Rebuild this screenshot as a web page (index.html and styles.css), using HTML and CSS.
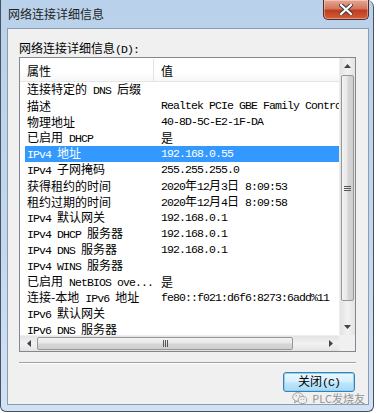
FILE: index.html
```html
<!DOCTYPE html>
<html lang="zh-CN">
<head>
    <meta charset="UTF-8">
    <title>网络连接详细信息</title>
    <link rel="stylesheet" href="styles.css">
</head>
<body>
    <div class="window">
        <div class="titlebar">
            <span class="title">网络连接详细信息</span>
            <button class="close-btn" type="button" aria-label="关闭">
                <svg width="14" height="11" viewBox="0 0 14 11">
                    <path d="M2 1 L12 10 M12 1 L2 10" stroke="#3c3c3c" stroke-width="4.2" stroke-linecap="square"/>
                    <path d="M2 1 L12 10 M12 1 L2 10" stroke="#ffffff" stroke-width="2.2" stroke-linecap="square"/>
                </svg>
            </button>
        </div>

        <div class="panel">
            <div class="panel-label">网络连接详细信息<span class="en">(D):</span></div>

            <div class="listbox">
                <div class="list-main">
                    <div class="list-header">
                        <div class="col-name">属性</div>
                        <div class="col-value">值</div>
                    </div>
                    <div class="list-rows">
                        <div class="row"><div class="col-name">连接特定的<span class="en"> DNS </span>后缀</div><div class="col-value"></div></div>
                        <div class="row"><div class="col-name">描述</div><div class="col-value en">Realtek PCIe GBE Family Controller</div></div>
                        <div class="row"><div class="col-name">物理地址</div><div class="col-value en">40-8D-5C-E2-1F-DA</div></div>
                        <div class="row"><div class="col-name">已启用<span class="en"> DHCP</span></div><div class="col-value">是</div></div>
                        <div class="row selected"><div class="col-name"><span class="en">IPv4 </span>地址</div><div class="col-value en">192.168.0.55</div></div>
                        <div class="row"><div class="col-name"><span class="en">IPv4 </span>子网掩码</div><div class="col-value en">255.255.255.0</div></div>
                        <div class="row"><div class="col-name">获得租约的时间</div><div class="col-value"><span class="en">2020</span>年<span class="en">12</span>月<span class="en">3</span>日<span class="en"> 8:09:53</span></div></div>
                        <div class="row"><div class="col-name">租约过期的时间</div><div class="col-value"><span class="en">2020</span>年<span class="en">12</span>月<span class="en">4</span>日<span class="en"> 8:09:58</span></div></div>
                        <div class="row"><div class="col-name"><span class="en">IPv4 </span>默认网关</div><div class="col-value en">192.168.0.1</div></div>
                        <div class="row"><div class="col-name"><span class="en">IPv4 DHCP </span>服务器</div><div class="col-value en">192.168.0.1</div></div>
                        <div class="row"><div class="col-name"><span class="en">IPv4 DNS </span>服务器</div><div class="col-value en">192.168.0.1</div></div>
                        <div class="row"><div class="col-name"><span class="en">IPv4 WINS </span>服务器</div><div class="col-value"></div></div>
                        <div class="row"><div class="col-name">已启用<span class="en"> NetBIOS ove...</span></div><div class="col-value">是</div></div>
                        <div class="row"><div class="col-name">连接-本地<span class="en"> IPv6 </span>地址</div><div class="col-value en">fe80::f021:d6f6:8273:6add%11</div></div>
                        <div class="row"><div class="col-name"><span class="en">IPv6 </span>默认网关</div><div class="col-value"></div></div>
                        <div class="row"><div class="col-name"><span class="en">IPv6 DNS </span>服务器</div><div class="col-value"></div></div>
                    </div>
                </div>

                <div class="vscroll">
                    <div class="arrow">
                        <svg width="7" height="4" viewBox="0 0 7 4"><path d="M0 4 L3.5 0 L7 4 Z" fill="#444"/></svg>
                    </div>
                    <div class="vthumb"><span class="grip-v"></span></div>
                    <div class="vtrack"></div>
                    <div class="arrow">
                        <svg width="7" height="4" viewBox="0 0 7 4"><path d="M0 0 L3.5 4 L7 0 Z" fill="#444"/></svg>
                    </div>
                </div>

                <div class="hscroll">
                    <div class="arrow">
                        <svg width="4" height="7" viewBox="0 0 4 7"><path d="M4 0 L0 3.5 L4 7 Z" fill="#444"/></svg>
                    </div>
                    <div class="hthumb"><span class="grip-h"></span></div>
                    <div class="htrack"></div>
                    <div class="arrow">
                        <svg width="4" height="7" viewBox="0 0 4 7"><path d="M0 0 L4 3.5 L0 7 Z" fill="#444"/></svg>
                    </div>
                </div>
                <div class="corner"></div>
            </div>

            <div class="separator"></div>

            <div class="actions">
                <button class="btn" type="button">关闭<span class="en">(C)</span></button>
                <div class="watermark">
                    <svg width="16" height="13" viewBox="0 0 16 13">
                        <ellipse cx="6" cy="5" rx="5.3" ry="4.3" fill="none" stroke="#9a9a9a" stroke-width="1"/>
                        <path d="M3 8.6 L2.4 11 L5 9.2" fill="none" stroke="#9a9a9a" stroke-width="1"/>
                        <ellipse cx="10.5" cy="8" rx="4.3" ry="3.5" fill="#f0f0f0" stroke="#9a9a9a" stroke-width="1"/>
                        <circle cx="4.2" cy="3.8" r="0.8" fill="#9a9a9a"/>
                        <circle cx="7.6" cy="3.8" r="0.8" fill="#9a9a9a"/>
                        <circle cx="9.2" cy="7.4" r="0.6" fill="#9a9a9a"/>
                        <circle cx="11.8" cy="7.4" r="0.6" fill="#9a9a9a"/>
                    </svg>
                    <span>PLC发烧友</span>
                </div>
            </div>
        </div>
    </div>
</body>
</html>
```

FILE: styles.css
```css
:root {
    --panel-bg: #f0f0f0;
    --list-border: #828790;
    --select-bg: #3399ff;
}

* {
    margin: 0;
    padding: 0;
    box-sizing: border-box;
}

body {
    background-color: #ffffff;
    font-family: "Noto Sans CJK SC", "Liberation Sans", sans-serif;
    font-size: 12px;
    line-height: 16px;
    color: #000000;
}

.en {
    font-family: "Liberation Mono", "Noto Sans CJK SC", monospace;
    font-size: 11.5px;
    letter-spacing: -0.9px;
    white-space: pre;
}

.window {
    width: 374px;
    height: 412px;
    display: flex;
    flex-direction: column;
    padding: 0 4px 6px 6px;
    border: 1px solid #4a5060;
    border-top: none;
    border-radius: 0 7px 6px 6px;
    background: linear-gradient(180deg, #b9d1ea 0%, #c3d8ef 60%, #d0e2f5 100%);
}

/* title bar */
.titlebar {
    height: 28px;
    display: flex;
    align-items: flex-start;
}

.title {
    padding-top: 6px;
    padding-left: 1px;
    color: #1e1e1e;
}

.close-btn {
    margin-left: auto;
    width: 46px;
    height: 20px;
    display: flex;
    align-items: center;
    justify-content: center;
    border: 1px solid #5b2a24;
    border-top: none;
    border-radius: 0 0 5px 5px;
    background: linear-gradient(180deg, #e8a593 0%, #d2775f 45%, #c13c1f 55%, #d0603c 100%);
    box-shadow: inset 0 0 0 1px rgba(255, 255, 255, 0.35);
}

/* content panel */
.panel {
    flex: 1;
    position: relative;
    display: flex;
    flex-direction: column;
    border: 1px solid #8c9bb0;
    background-color: var(--panel-bg);
    padding: 11px 12px 0 11px;
}

.panel-label {
    height: 16px;
    margin-bottom: 1px;
}

.listbox {
    width: 337px;
    height: 295px;
    display: grid;
    grid-template-columns: 319px 16px;
    grid-template-rows: 277px 16px;
    border: 1px solid var(--list-border);
    background-color: #ffffff;
}

.list-main {
    overflow: hidden;
    white-space: nowrap;
}

.list-header {
    height: 24px;
    display: flex;
    align-items: center;
    border-bottom: 1px solid #e5e5e5;
    background: linear-gradient(180deg, #ffffff 0%, #ffffff 60%, #f6f7f8 100%);
}

.list-header .col-name {
    height: 22px;
    padding-top: 4px;
    border-right: 1px solid #e3e4e6;
}

.list-header .col-value {
    padding-top: 2px;
}

.col-name {
    width: 134px;
    flex-shrink: 0;
    padding-left: 7px;
}

.col-value {
    padding-left: 7px;
}

.row {
    height: 16px;
    display: flex;
    align-items: center;
}

.row.selected {
    margin-left: 5px;
    background-color: var(--select-bg);
    color: #ffffff;
}

.row.selected .col-name {
    width: 129px;
    padding-left: 2px;
}

/* vertical scrollbar */
.vscroll {
    grid-row: 1;
    grid-column: 2;
    display: flex;
    flex-direction: column;
    background: linear-gradient(90deg, #e3e3e3, #f2f2f2 50%, #e3e3e3);
    border-left: 1px solid #eeeeee;
}

.arrow {
    height: 16px;
    flex-shrink: 0;
    display: flex;
    align-items: center;
    justify-content: center;
}

.vthumb {
    height: 226px;
    margin: 1px 1px 0 1px;
    display: flex;
    align-items: center;
    justify-content: center;
    border: 1px solid #979797;
    border-radius: 2px;
    background: linear-gradient(90deg, #f3f3f3 0%, #e8e8e8 45%, #d6d6d6 55%, #cfcfcf 100%);
}

.grip-v {
    width: 7px;
    height: 5px;
    border-top: 1px solid #555;
    border-bottom: 1px solid #555;
    background: linear-gradient(180deg, transparent 40%, #555 40%, #555 60%, transparent 60%);
}

.vtrack {
    flex: 1;
}

/* horizontal scrollbar */
.hscroll {
    grid-row: 2;
    grid-column: 1;
    display: flex;
    background: linear-gradient(180deg, #e3e3e3, #f2f2f2 50%, #e3e3e3);
    border-top: 1px solid #eeeeee;
}

.hscroll .arrow {
    width: 17px;
    height: auto;
}

.hthumb {
    width: 256px;
    margin: 1px 0;
    display: flex;
    align-items: center;
    justify-content: center;
    border: 1px solid #979797;
    border-radius: 2px;
    background: linear-gradient(180deg, #f3f3f3 0%, #e8e8e8 45%, #d6d6d6 55%, #cfcfcf 100%);
}

.grip-h {
    width: 5px;
    height: 7px;
    border-left: 1px solid #555;
    border-right: 1px solid #555;
    background: linear-gradient(90deg, transparent 40%, #555 40%, #555 60%, transparent 60%);
}

.htrack {
    flex: 1;
}

.corner {
    grid-row: 2;
    grid-column: 2;
    background-color: var(--panel-bg);
}

.separator {
    width: 337px;
    margin-top: 10px;
    border-top: 1px solid #a0a0a0;
    border-bottom: 1px solid #ffffff;
}

.actions {
    display: flex;
    justify-content: flex-end;
    padding-top: 8px;
    padding-right: 1px;
}

.btn {
    width: 72px;
    height: 20px;
    font-family: "Noto Sans CJK SC", "Liberation Sans", sans-serif;
    font-size: 12px;
    line-height: 16px;
    color: #000000;
    border: 1px solid #3c7fb1;
    border-radius: 3px;
    background: linear-gradient(180deg, #eaf6fd 0%, #d9f0fc 45%, #bee6fd 55%, #a7d9f5 100%);
    box-shadow: inset 0 0 0 1px #8fd1f5;
}

.watermark {
    position: absolute;
    right: 3px;
    bottom: -2px;
    display: flex;
    align-items: center;
    gap: 4px;
    color: #8a8a8a;
    font-size: 11px;
    opacity: 0.9;
}
```
